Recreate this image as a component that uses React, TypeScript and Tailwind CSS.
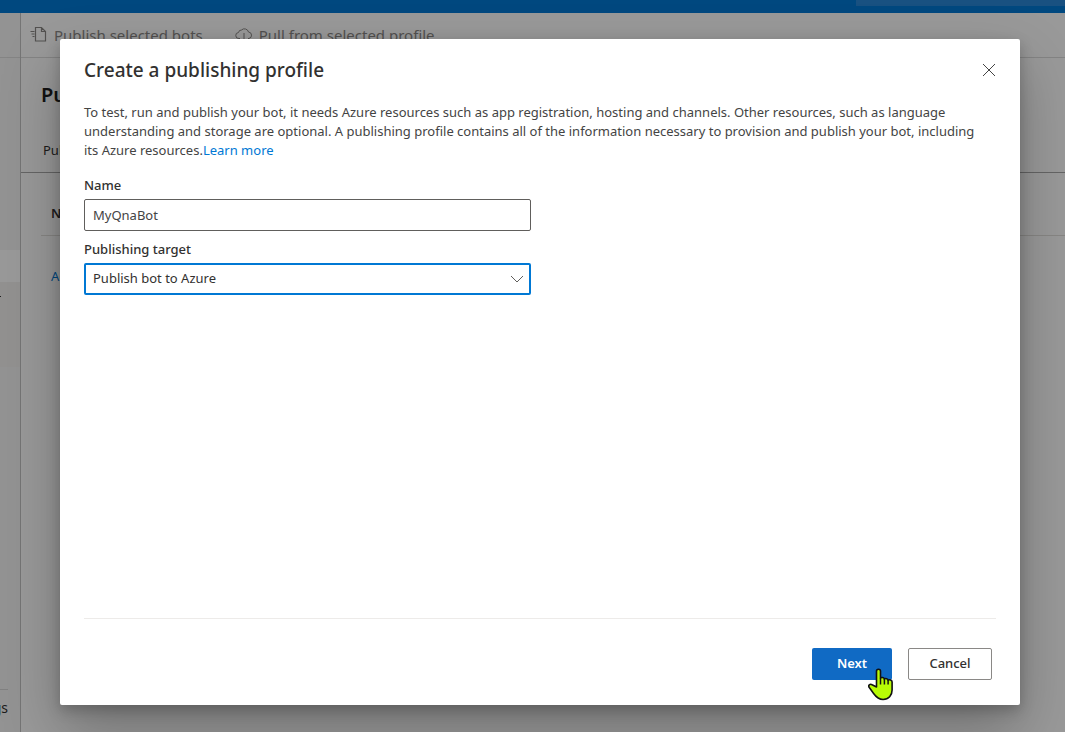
import React from "react";

function PublishIcon() {
  return (
    <svg width="18" height="18" viewBox="0 0 18 18" fill="none" stroke="currentColor" strokeWidth="1.2" aria-hidden="true">
      <path d="M5.500 1.500h6l4 4v9.500h-10zM11.500 1.500v4h4M.5 5.500h4M1.500 8h3M2.500 10.500h2" />
    </svg>
  );
}

function CloudDownIcon() {
  return (
    <svg width="18" height="18" viewBox="0 0 18 18" fill="none" stroke="currentColor" strokeWidth="1" aria-hidden="true">
      <path d="M5 12.500H4a3 3 0 0 1-.5-6 3 3 0 0 1 3-2.500 4.200 4.200 0 0 1 7 2 3.300 3.300 0 0 1 .5 6.500h-1M9 7v9M6.500 13.500 9 16l2.500-2.500" />
    </svg>
  );
}

function CloseIcon() {
  return (
    <svg width="14" height="14" viewBox="0 0 14 14" fill="none" stroke="currentColor" strokeWidth="1" aria-hidden="true">
      <path d="m1 1 12 12M13 1 1 13" />
    </svg>
  );
}

function ChevronIcon() {
  return (
    <svg width="14" height="8" viewBox="0 0 14 8" fill="none" stroke="currentColor" strokeWidth="1" aria-hidden="true">
      <path d="m1 1 6 6 6-6" />
    </svg>
  );
}

function HandCursor() {
  return (
    <svg width="27" height="34" viewBox="0 0 27 34" aria-hidden="true">
      <path
        d="M8.500 19V3.200a2 2 0 0 1 4 0V10c.8-1 3.600-.6 3.900 1 1-.9 3.500-.4 3.700 1.100 1.200-.7 4 0 4 2V22c0 5.500-3.500 9.500-9 9.500-4.500 0-7-2.500-9.500-6L1.300 19.500c-1.600-2.300.8-4 2.800-2.800z"
        fill="#b8fb05"
        stroke="#111"
        strokeWidth="1.600"
        strokeLinejoin="round"
      />
      <path d="M12.500 10v6.500M16.400 11v5.500M20.100 12v4.500" fill="none" stroke="#111" strokeWidth="1.500" />
    </svg>
  );
}

function Backdrop() {
  return (
    <div className="flex min-h-screen flex-col bg-white">
      <header className="flex h-[13px] shrink-0 justify-end bg-[#0078d4]">
        <div className="h-[6px] w-[209px] bg-[#2b88d8]" />
      </header>
      <div className="flex grow">
        <aside className="flex w-[21px] shrink-0 flex-col overflow-hidden border-r border-[#c4c4c4] bg-[#f6f6f6]">
          <div className="h-[45px] border-b border-[#dcdcdc]" />
          <div className="h-48" />
          <div className="h-8 bg-white" />
          <div className="flex h-[85px] bg-[#f3f2f1] pt-[14px]">
            <div className="h-px w-px bg-[#333]" />
          </div>
          <div className="grow" />
          <div className="flex h-[42px] w-2 justify-end self-start pt-2 text-[14px] leading-5 text-[#323130] shadow-[0_-1px_0_#d8d8d8]">
            gs
          </div>
        </aside>
        <main className="min-w-0 grow">
          <div className="flex h-[45px] items-center gap-8 border-b border-[#dcdcdc] pl-[9px] text-[15px] text-[#8a8886]">
            <button className="flex items-center gap-[6px]">
              <PublishIcon />
              Publish selected bots
            </button>
            <button className="flex items-center gap-[6px]">
              <CloudDownIcon />
              Pull from selected profile
            </button>
          </div>
          <h1 className="pt-[23px] pl-5 text-[20px] leading-7 font-semibold text-[#201f1e]">Publish</h1>
          <div className="mt-5 flex h-[44px] items-center border-b border-[#a8a8a8] pl-[22px] text-[13px] text-[#323130]">
            Publish
          </div>
          <div className="ml-5 flex h-[63px] items-end border-b border-[#e1dfdd] pb-3 pl-[10px] text-[13px] leading-5 font-semibold text-[#323130]">
            Name
          </div>
          <a href="#add" className="mt-[30px] ml-[30px] block w-fit text-[13px] leading-5 text-[#0078d4]">
            Add new
          </a>
        </main>
      </div>
    </div>
  );
}

export default function App() {
  return (
    <div className="relative font-['Noto_Sans','Open_Sans',sans-serif]">
      <Backdrop />
      <div className="absolute inset-0 flex bg-black/40 pt-[39px] pr-[45px] pb-[27px] pl-[60px]">
        <section
          role="dialog"
          aria-modal="true"
          aria-labelledby="dialog-title"
          className="flex min-w-0 grow flex-col rounded-[2px] bg-white px-6 pb-[25px] text-[#323130] shadow-[0_26px_58px_rgba(0,0,0,0.26),0_5px_14px_rgba(0,0,0,0.22)]"
        >
          <div className="flex items-center justify-between pt-4">
            <h2 id="dialog-title" className="text-[19px] leading-[30px] font-medium">
              Create a publishing profile
            </h2>
            <button aria-label="Close" className="text-[#444]">
              <CloseIcon />
            </button>
          </div>
          <p className="mt-[18px] text-[13px] leading-[19px] text-[#444]">
            To test, run and publish your bot, it needs Azure resources such as app registration, hosting and channels. Other resources, such as language
            <br />
            understanding and storage are optional. A publishing profile contains all of the information necessary to provision and publish your bot, including
            <br />
            its Azure resources.
            <a href="#learn-more" className="text-[#0078d4]">
              Learn more
            </a>
          </p>
          <form className="mt-[15px] flex w-[447px] flex-col text-[13px]">
            <label htmlFor="profile-name" className="leading-5 font-medium">
              Name
            </label>
            <input
              id="profile-name"
              defaultValue="MyQnaBot"
              className="mt-1 h-8 rounded-[2px] border border-[#605e5c] bg-white px-2 text-[#444] outline-none"
            />
            <label htmlFor="target" className="mt-2 leading-5 font-medium">
              Publishing target
            </label>
            <div className="relative mt-1 flex">
              <select
                id="target"
                className="h-8 grow appearance-none rounded-[2px] border-2 border-[#0078d4] bg-white px-[7px] text-[#323130] outline-none"
              >
                <option>Publish bot to Azure</option>
              </select>
              <span className="pointer-events-none absolute top-3 right-[7px] text-[#605e5c]">
                <ChevronIcon />
              </span>
            </div>
          </form>
          <div className="mt-auto border-t border-[#edebe9]" />
          <div className="mt-[29px] flex justify-end gap-4 pr-1 text-[13px]">
            <button className="relative h-8 w-20 rounded-[2px] bg-[#106ac4] font-semibold text-white">
              Next
              <span className="absolute top-5 left-14">
                <HandCursor />
              </span>
            </button>
            <button className="h-8 w-[84px] rounded-[2px] border border-[#8a8886] bg-white font-medium text-[#323130]">
              Cancel
            </button>
          </div>
        </section>
      </div>
    </div>
  );
}
